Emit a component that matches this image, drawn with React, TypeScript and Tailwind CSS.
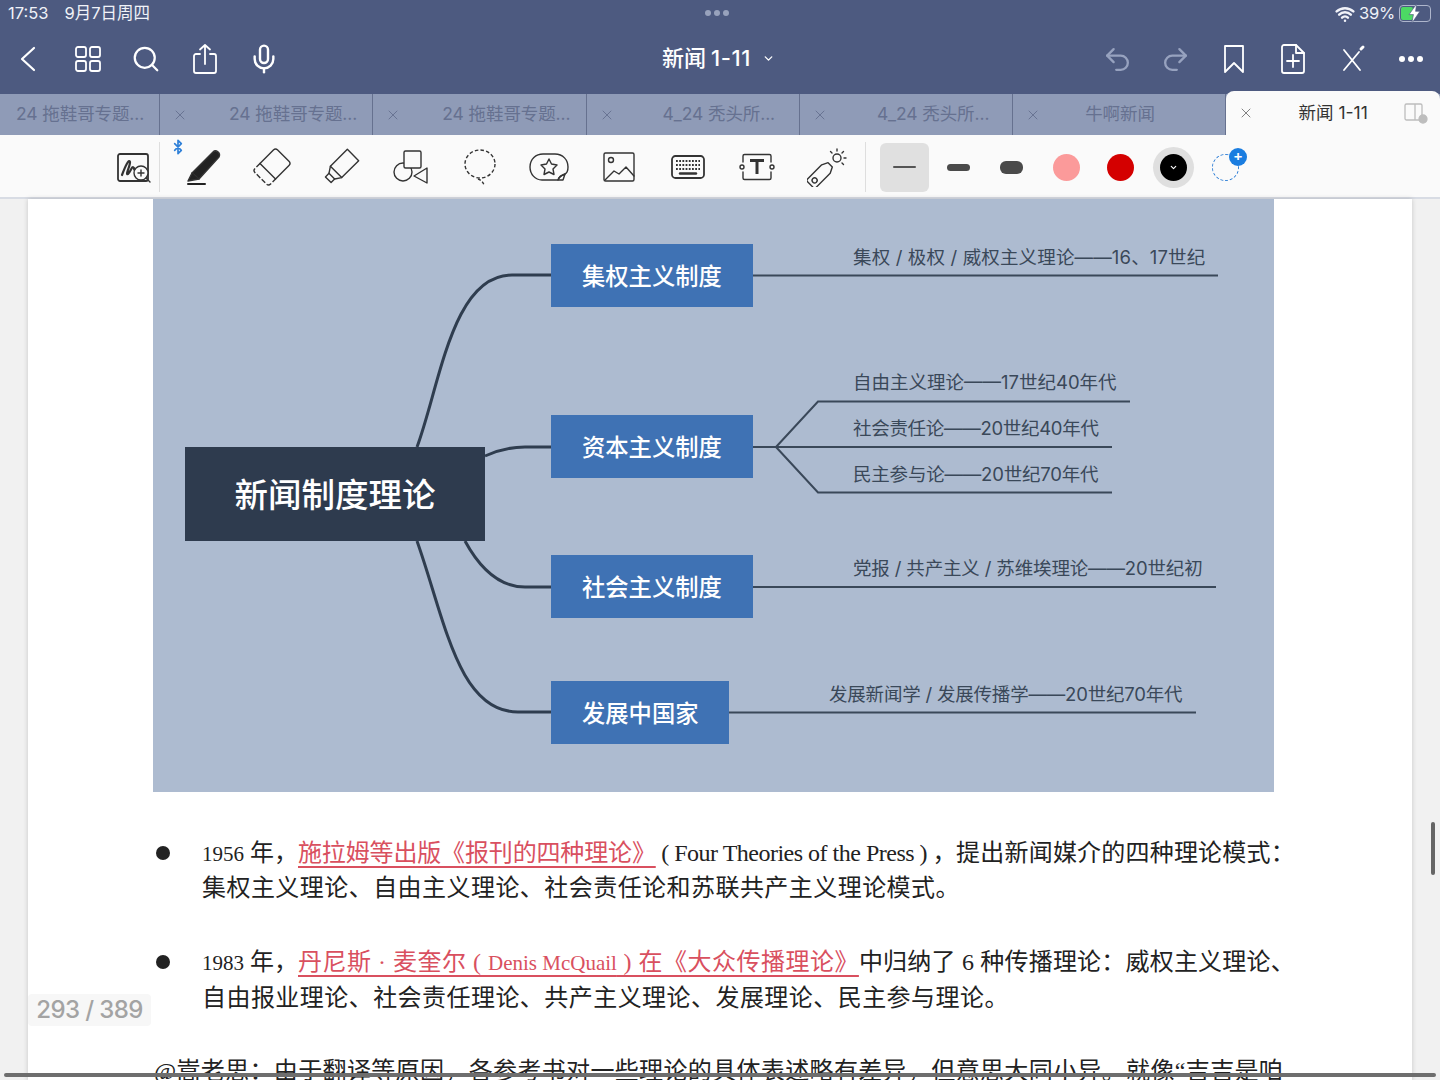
import { Bluetooth, ChevronDown, Mic, Redo2, Undo2, Wifi, X, Search } from "lucide-react"

const sans = "font-['Inter','Noto_Sans_CJK_SC',sans-serif]"

const tabs = [
  { label: "24 拖鞋哥专题...", first: true, gap: "" },
  { label: "24 拖鞋哥专题...", gap: "ml-[41px]" },
  { label: "24 拖鞋哥专题...", gap: "ml-[41px]" },
  { label: "4_24 秃头所...", gap: "ml-[48px]" },
  { label: "4_24 秃头所...", gap: "ml-[49px]" },
  { label: "牛啊新闻", gap: "ml-[44px]" },
]

function TopIcon({ children }: { children: React.ReactNode }) {
  return (
    <svg viewBox="0 0 32 32" className="h-8 w-8" fill="none" stroke="currentColor" strokeWidth="1.8" strokeLinecap="round" strokeLinejoin="round">
      {children}
    </svg>
  )
}

function ToolIcon({ children }: { children: React.ReactNode }) {
  return (
    <svg viewBox="0 0 40 40" className="h-10 w-10 text-[#333]" fill="none" stroke="currentColor" strokeWidth="1.4" strokeLinecap="round" strokeLinejoin="round">
      {children}
    </svg>
  )
}

const tools = [
  // pen
  <ToolIcon key="pen">
    <path d="M30 5 C33 2 38 6 36 10 L16 32 L9 26 Z" fill="#222" />
    <path d="M9 26 L5 34 L16 32" fill="#222" />
    <path d="M5 37 H22" strokeWidth="2" stroke="#222" />
  </ToolIcon>,
  // eraser
  <ToolIcon key="eraser">
    <g transform="rotate(-45 20 20)">
      <path d="M14 9 H33 a3 3 0 0 1 3 3 V28 a3 3 0 0 1 -3 3 H14" />
      <path d="M14 9 H7 a3 3 0 0 0 -3 3 V28 a3 3 0 0 0 3 3 H14" strokeDasharray="5 2" strokeLinecap="butt" />
      <path d="M14 9 V31" />
    </g>
  </ToolIcon>,
  // highlighter
  <ToolIcon key="highlighter">
    <g transform="rotate(-45 20 20)">
      <path d="M13 12 H37 V28 H13 L7 24 V16 Z" />
      <path d="M7 16 H2 V24 H7" />
      <path d="M13 12 V28" />
    </g>
  </ToolIcon>,
  // shapes
  <ToolIcon key="shapes">
    <circle cx="12" cy="25" r="9" />
    <rect x="13" y="4" width="17" height="17" rx="1.5" fill="#fafafa" />
    <path d="M36 21 V36 L23 29 Z" />
  </ToolIcon>,
  // lasso
  <ToolIcon key="lasso">
    <ellipse cx="20" cy="17" rx="15" ry="14" strokeDasharray="3.5 2.2" strokeLinecap="butt" />
    <path d="M18 32 C21 33 23 35 24 38" strokeDasharray="3 2" strokeLinecap="butt" />
  </ToolIcon>,
  // sticker
  <ToolIcon key="sticker">
    <path d="M29 33 H13 C6 33 1 27 1 20 C1 12 7 7 14 7 H26 C34 7 39 13 39 20 C39 23 38 26 36 27 C33 28 30 30 29 33 Z" />
    <path d="M29 33 C30 30 33 28 36 27 L34 33 Z" />
    <path d="M20 12 L22.5 17 L28 18 L24 22 L25 27.5 L20 25 L15 27.5 L16 22 L12 18 L17.5 17 Z" />
  </ToolIcon>,
  // image
  <ToolIcon key="image">
    <rect x="5" y="6" width="30" height="28" rx="1.5" />
    <circle cx="12" cy="13" r="2.5" />
    <path d="M6 33 L15 24 L20 27 L27 20 L35 29" />
  </ToolIcon>,
  // keyboard
  <ToolIcon key="keyboard">
    <rect x="4" y="9" width="32" height="22" rx="3.5" strokeWidth="1.8" />
    <path d="M8 14 H32 M8 18 H32 M8 22 H32" strokeDasharray="1.8 1.4" strokeLinecap="butt" strokeWidth="2" />
    <path d="M12 26.5 H28" strokeWidth="2.4" />
  </ToolIcon>,
  // text box
  <ToolIcon key="textbox">
    <path d="M6 15 V9 a1.5 1.5 0 0 1 1.5 -1.5 H32.5 a1.5 1.5 0 0 1 1.5 1.5 V15 M6 25 V31 a1.5 1.5 0 0 0 1.5 1.5 H32.5 a1.5 1.5 0 0 0 1.5 -1.5 V25" />
    <circle cx="5" cy="20" r="2" />
    <circle cx="35" cy="20" r="2" />
    <path d="M13 13.5 H27 M20 13.5 V27" strokeWidth="3" strokeLinecap="butt" />
  </ToolIcon>,
  // laser pointer
  <ToolIcon key="laser">
    <g transform="rotate(-45 14 27)">
      <path d="M1 21 H21 L27 24 V30 L21 33 H1 a2 2 0 0 1 -2 -2 V23 a2 2 0 0 1 2 -2 Z" />
      <circle cx="5" cy="27" r="2.5" />
    </g>
    <circle cx="30" cy="11" r="4" />
    <path d="M30 2 V4 M39 11 H37 M36.500 4.500 L35 6 M36.500 17.500 L35 16 M23.500 4.500 L25 6" />
  </ToolIcon>,
]

function Mindmap() {
  const branches = [
    { label: "集权主义制度", box: "left-[398px] top-[45px] w-[202px] pl-[31px]" },
    { label: "资本主义制度", box: "left-[398px] top-[216px] w-[202px] pl-[31px]" },
    { label: "社会主义制度", box: "left-[398px] top-[356px] w-[202px] pl-[31px]" },
    { label: "发展中国家", box: "left-[398px] top-[482px] w-[178px] pl-[31px]" },
  ]
  const leaves = [
    { label: "集权 / 极权 / 威权主义理论——16、17世纪", pos: "left-[700px] top-[44px] tracking-[0.15px]" },
    { label: "自由主义理论——17世纪40年代", pos: "left-[700px] top-[169px]" },
    { label: "社会责任论——20世纪40年代", pos: "left-[700px] top-[215px] tracking-[-0.3px]" },
    { label: "民主参与论——20世纪70年代", pos: "left-[700px] top-[261px] tracking-[-0.2px]" },
    { label: "党报 / 共产主义 / 苏维埃理论——20世纪初", pos: "left-[700px] top-[355px] tracking-[-0.15px]" },
    { label: "发展新闻学 / 发展传播学——20世纪70年代", pos: "left-[676px] top-[481px] tracking-[-0.2px]" },
  ]
  return (
    <div className={`relative h-[593px] w-[1121px] bg-[#adbbd0] ${sans}`}>
      <svg viewBox="153 199 1121 593" className="absolute inset-0 h-full w-full" fill="none" stroke="#2f3d4f">
        <g strokeWidth="3">
          <path d="M417 447 C440 385 452 275 512 275 L551 275" />
          <path d="M485 456 Q505 447 525 447 L551 447" />
          <path d="M465 541 Q490 587 525 587 L551 587" />
          <path d="M417 541 C445 620 458 712 518 712 L551 712" />
        </g>
        <g strokeWidth="2" stroke="#3a4859">
          <path d="M753 275.500 H1218" />
          <path d="M753 447 H1112" />
          <path d="M776 447 L818 401.500 H1130" />
          <path d="M776 447 L818 492.500 H1112" />
          <path d="M753 587 H1216" />
          <path d="M729 712.500 H1196" />
        </g>
      </svg>
      <div className="absolute left-[32px] top-[248px] flex h-[94px] w-[300px] items-center justify-center bg-[#2e3b4e] pt-[2px] text-[33.500px] font-medium text-white">
        新闻制度理论
      </div>
      {branches.map((b) => (
        <div key={b.label} className={`absolute flex h-[63px] items-center bg-[#3f72b4] pt-[3px] text-[23.300px] font-medium text-white ${b.box}`}>
          {b.label}
        </div>
      ))}
      {leaves.map((l) => (
        <div key={l.label} className={`absolute whitespace-nowrap text-[18.500px] leading-[28px] text-[#3a4859] ${l.pos}`}>
          {l.label}
        </div>
      ))}
    </div>
  )
}

function Bullet() {
  return <span className="absolute left-[-46px] top-[11px] h-[14px] w-[14px] rounded-full bg-[#222]" />
}

export default function App() {
  return (
    <div className="relative h-[1080px] w-[1440px] overflow-hidden bg-[#f1f1f1]">
      {/* Top bar */}
      <header className={`h-[94px] bg-[#4d5a80] text-white ${sans}`}>
        <div className="relative flex h-[27px] items-center justify-between pl-2 pr-[9px] text-[16.500px] text-[#f0f2f8]">
          <div className="flex gap-[16px]">
            <span>17:53</span>
            <span>9月7日周四</span>
          </div>
          <div className="absolute left-[705px] top-[10px] flex gap-[3px]">
            <span className="h-[6px] w-[6px] rounded-full bg-[#98a2bc]" />
            <span className="h-[6px] w-[6px] rounded-full bg-[#98a2bc]" />
            <span className="h-[6px] w-[6px] rounded-full bg-[#98a2bc]" />
          </div>
          <div className="flex items-center gap-[4px]">
            <Wifi size={20} strokeWidth={3} />
            <span className="tracking-[-0.2px]">39%</span>
            <div className="relative flex h-[17px] w-[32px] items-center rounded-[4px] border border-[#aeb6cc] p-[1px]">
              <div className="h-full w-[12px] rounded-[2px] bg-[#4cd964]" />
              <svg viewBox="0 0 12 18" className="absolute left-[8px] top-[-3px] h-[21px] w-[13px]" fill="#fff" stroke="#4d5a80" strokeWidth="0.6">
                <path d="M8 0 L1 10 H5 L3.500 18 L11 7 H7 Z" />
              </svg>
            </div>
          </div>
        </div>
        <div className="relative mt-[1px] flex h-[62px] items-center justify-between pl-[12px] pr-[13px]">
          <div className="flex items-center gap-[27px]">
            <TopIcon>
              <path d="M22 5 L10 16 L22 27" strokeWidth="2.2" />
            </TopIcon>
            <div className="ml-[1px]">
              <TopIcon>
                <rect x="4" y="4" width="10" height="10" rx="2" />
                <rect x="18" y="4" width="10" height="10" rx="2" />
                <rect x="4" y="18" width="10" height="10" rx="2" />
                <rect x="18" y="18" width="10" height="10" rx="2" />
              </TopIcon>
            </div>
            <Search size={30} strokeWidth={1.8} />
            <div className="ml-[1px]">
              <TopIcon>
                <path d="M11 11 H7 a2 2 0 0 0 -2 2 V28 a2 2 0 0 0 2 2 H25 a2 2 0 0 0 2 -2 V13 a2 2 0 0 0 -2 -2 H21" />
                <path d="M16 21 V2 M11 6.500 L16 2 L21 6.500" />
              </TopIcon>
            </div>
            <Mic size={32} strokeWidth={1.8} />
          </div>
          <div className="absolute left-[662px] top-[14px] flex items-center gap-[11px] text-[22px] font-medium">
            <span>
              新闻<span className="ml-[5px] tracking-[0.6px]">1-11</span>
            </span>
            <ChevronDown size={13} strokeWidth={2.5} />
          </div>
          <div className="flex items-center gap-[27px]">
            <Undo2 size={31} strokeWidth={1.8} className="text-[#97a2bf]" />
            <Redo2 size={31} strokeWidth={1.8} className="text-[#97a2bf]" />
            <TopIcon>
              <path d="M7 3 H25 V29 L16 20 L7 29 Z" />
            </TopIcon>
            <TopIcon>
              <path d="M19 2 H7 a2 2 0 0 0 -2 2 V28 a2 2 0 0 0 2 2 H25 a2 2 0 0 0 2 -2 V10 Z" />
              <path d="M19 2 V10 H27 M16 12 V24 M10 18 H22" />
            </TopIcon>
            <TopIcon>
              <path d="M8 7 L24 27 M23 9 L8 27" />
              <path d="M25 6 L27 4" strokeWidth="3" />
            </TopIcon>
            <div className="flex w-8 justify-center gap-[3px]">
              <span className="h-[6px] w-[6px] rounded-full bg-white" />
              <span className="h-[6px] w-[6px] rounded-full bg-white" />
              <span className="h-[6px] w-[6px] rounded-full bg-white" />
            </div>
          </div>
        </div>
      </header>

      {/* Tabs */}
      <nav className={`flex h-[41px] bg-[#8f9bb7] text-[17.500px] text-[#667190] ${sans}`}>
        {tabs.map((t, i) => (
          <div key={i} className={`flex h-full items-center border-r border-[#66718f] ${t.first ? "w-[160px] pl-[16px]" : "w-[213.300px] pl-[12px]"}`}>
            {!t.first && <X size={16} strokeWidth={1.4} className="shrink-0" />}
            <span className={`whitespace-nowrap tracking-[-0.1px] ${t.gap}`}>{t.label}</span>
          </div>
        ))}
        <div className="relative z-10 mt-[-3px] flex h-[44px] flex-1 items-center rounded-t-[8px] bg-[#fafafa] pl-[12px] pr-[12px] text-[#333]">
          <X size={16} strokeWidth={1.4} className="shrink-0 text-[#777]" />
          <span className="ml-[44px] flex-1 whitespace-nowrap">新闻 1-11</span>
          <svg viewBox="0 0 24 22" className="h-[22px] w-[24px]" fill="none" stroke="#bdbdbd" strokeWidth="1.300">
            <rect x="1" y="2" width="17" height="16" rx="1.500" />
            <path d="M11 2 V18" />
            <circle cx="19" cy="17" r="4" fill="#bdbdbd" />
          </svg>
        </div>
      </nav>

      {/* Tool row */}
      <div className="flex h-[64px] items-center border-b-2 border-[#d8dce4] bg-[#fafafa] pl-[113px] pt-[2px]">
        <div className="flex h-[50px] w-[47px] items-center border-r border-[#dedede]">
          <ToolIcon>
            <rect x="5" y="7" width="30" height="27" rx="2" strokeWidth="1.800" />
            <path d="M9 28 C12 20 16 11 17 15 C17 20 12 28 15 27 C18 24 19 18 21 21 C21 24 23 23 25 21" strokeWidth="2.200" />
            <circle cx="28" cy="26" r="7" fill="#fafafa" />
            <path d="M28 23 V29 M25 26 H31 M33 31 L37 35" />
          </ToolIcon>
        </div>
        <div className="relative ml-[8px] flex">
          <Bluetooth size={16} strokeWidth={2.500} className="absolute left-[2px] top-[-8px] text-[#2f80d8]" />
          {tools.map((icon) => (
            <div key={icon.key} className="flex w-[69.330px] justify-center">
              {icon}
            </div>
          ))}
        </div>
        <div className="ml-[4px] h-[50px] w-px bg-[#dedede]" />
        <div className="ml-[12px] flex items-center">
          <div className="flex w-[53.300px] justify-center">
            <div className="flex h-[49px] w-[49px] items-center justify-center rounded-[6px] bg-[#e0e0e0]">
              <span className="h-[2px] w-[23px] rounded-full bg-[#555]" />
            </div>
          </div>
          <div className="flex w-[53.300px] justify-center">
            <span className="h-[7px] w-[23px] rounded-full bg-[#4a4a4a]" />
          </div>
          <div className="flex w-[53.300px] justify-center">
            <span className="h-[13px] w-[23px] rounded-[6px] bg-[#4a4a4a]" />
          </div>
          <div className="flex w-[53.300px] justify-center">
            <span className="ml-[4px] h-[27px] w-[27px] rounded-full bg-[#fb9a9a]" />
          </div>
          <div className="flex w-[53.300px] justify-center">
            <span className="ml-[4px] h-[27px] w-[27px] rounded-full bg-[#d40000]" />
          </div>
          <div className="flex w-[53.300px] justify-center">
            <span className="ml-[4px] flex h-[41px] w-[41px] items-center justify-center rounded-full bg-[#dfdfdf]">
              <span className="flex h-[27px] w-[27px] items-center justify-center rounded-full bg-black">
                <ChevronDown size={9} strokeWidth={3} className="text-white" />
              </span>
            </span>
          </div>
          <div className="relative flex w-[53.300px] justify-center">
            <span className="ml-[2px] h-[27px] w-[27px] rounded-full border border-dashed border-[#2f7fd6]" />
            <span className="absolute left-[31px] top-[-6px] flex h-[18px] w-[18px] items-center justify-center rounded-full bg-[#1a7de0] text-[15px] leading-none font-bold text-white">
              +
            </span>
          </div>
        </div>
      </div>

      {/* Document page */}
      <main className="mx-[28px] h-[882px] overflow-hidden bg-white pl-[125px] shadow-[0_0_5px_rgba(0,0,0,0.18)]">
        <Mindmap />
        <div className="font-['Liberation_Serif','Noto_Sans_CJK_SC',serif] text-[24px] leading-[36px] text-[#222]">
          <div className="relative ml-[49px] mt-[43px] whitespace-nowrap">
            <Bullet />
            <div className="h-[35px]">
              <span className="text-[21px]">1956</span>
              <span> 年，</span>
              <span className="tracking-[-0.15px] text-[#d9505f] underline decoration-[#d9505f] decoration-2 underline-offset-[5px]">施拉姆等出版《报刊的四种理论》</span>
              <span className="tracking-[-0.5px]"> ( Four Theories of the Press ) ，</span>
              <span className="tracking-[0.2px]">提出新闻媒介的四种理论模式：</span>
            </div>
            <div className="tracking-[0.45px]">集权主义理论、自由主义理论、社会责任论和苏联共产主义理论模式。</div>
          </div>
          <div className="relative ml-[49px] mt-[38px] whitespace-nowrap">
            <Bullet />
            <div className="h-[36px]">
              <span className="text-[21px]">1983</span>
              <span> 年，</span>
              <span className="tracking-[0.5px] text-[#d9505f] underline decoration-[#d9505f] decoration-2 underline-offset-[5px]">
                丹尼斯 · 麦奎尔 ( <span className="text-[21px] tracking-normal">Denis McQuail</span> ) 在《大众传播理论》
              </span>
              <span className="tracking-[0.2px]">中归纳了 6 种传播理论：威权主义理论、</span>
            </div>
            <div className="tracking-[0.45px]">自由报业理论、社会责任理论、共产主义理论、发展理论、民主参与理论。</div>
          </div>
          <div className="ml-[1px] mt-[37px] whitespace-nowrap tracking-[0.35px]">@嵩老思：由于翻译等原因，各参考书对一些理论的具体表述略有差异，但意思大同小异。就像“吉吉是咱</div>
        </div>
      </main>

      {/* Overlays */}
      <div className={`absolute left-[28px] top-[994px] flex h-[32px] w-[123px] items-center justify-center rounded-[4px] bg-[#f7f7f7] text-[24px] font-medium tracking-[-0.6px] text-[#a3a3a3] ${sans}`}>
        293 / 389
      </div>
      <div className="absolute left-[1431px] top-[822px] h-[53px] w-[4px] rounded-full bg-[#666]" />
      <div className="absolute left-[4px] top-[1073px] h-[4px] w-[1432px] rounded-full bg-[#6e6e6e]" />
    </div>
  )
}
